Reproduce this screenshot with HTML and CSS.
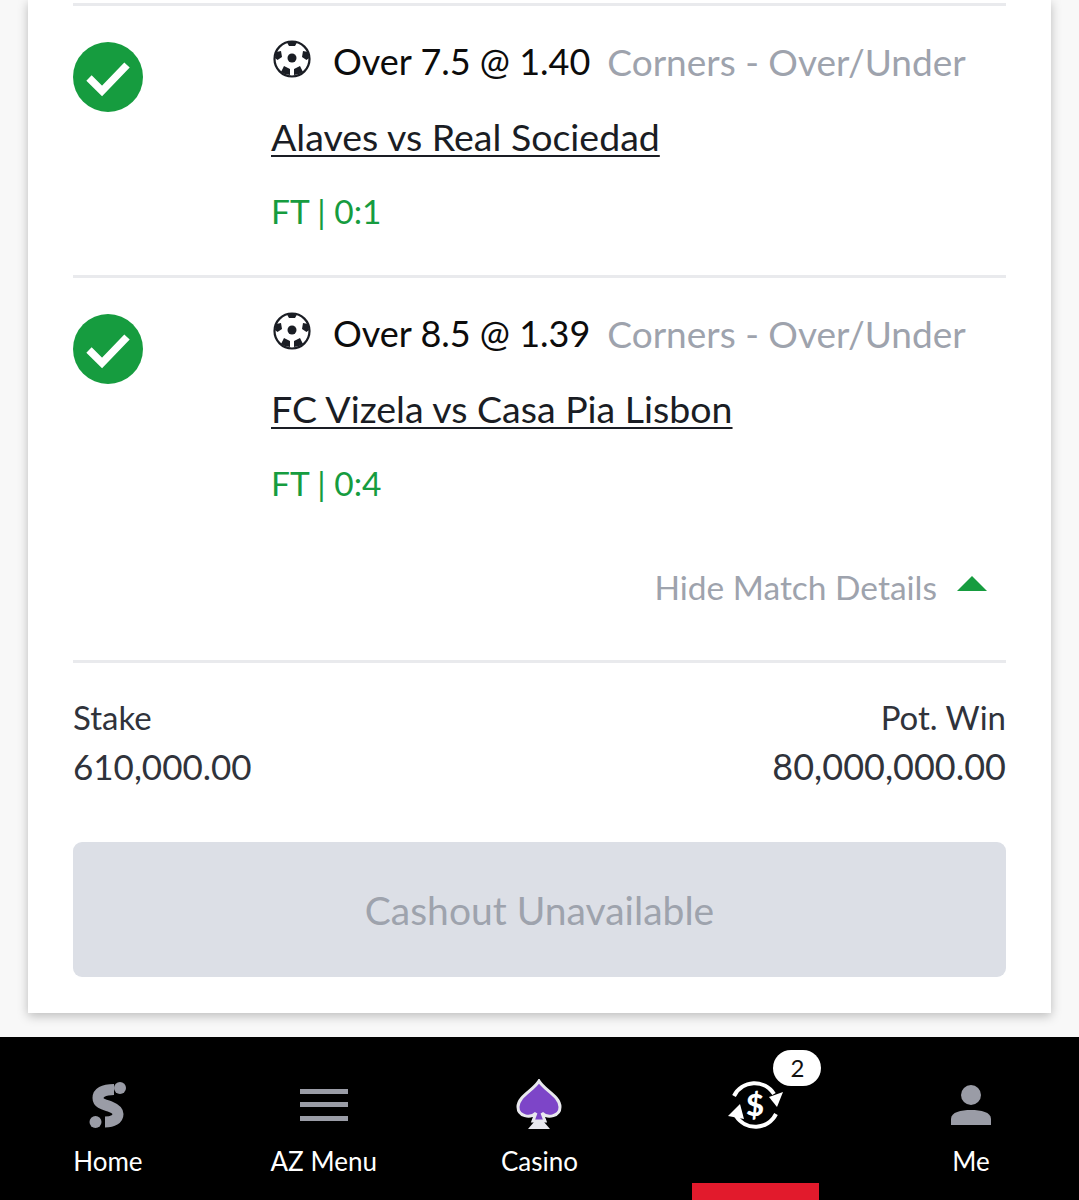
FILE: index.html
```html
<!DOCTYPE html>
<html lang="en">
  <head>
    <meta charset="UTF-8" />
    <title>Bet details</title>
    <link rel="stylesheet" href="styles.css">
  </head>
  <body>
    <main class="card">
      <section class="leg">
        <svg class="tick" viewBox="0 0 70 70"><circle cx="35" cy="35" r="35" fill="#169c3f"/><path d="M16 36 L29 49 L54 23" fill="none" stroke="#fff" stroke-width="7.5"/></svg>
        <div class="leg-info">
          <div class="leg-line">
            <svg class="ball" viewBox="0 0 38 38"><circle cx="19" cy="19" r="17.5" fill="#fff" stroke="#1a1d24" stroke-width="2.2"/><circle cx="19" cy="18" r="4.5" fill="#1a1d24"/><path d="M14 2.5 Q19 1 24 2.5 L22 6 L16 6 Z M3 12 L8 11 L9 17 L4.5 20 L2 18 Z M35 12 L30 11 L29 17 L33.5 20 L36 18 Z M8 32 L11 26 L17 29 L17 35 Q12 35 8 32 Z M30 32 L27 26 L21 29 L21 35 Q26 35 30 32 Z" fill="#1a1d24"/></svg>
            <span class="pick">Over 7.5 @ 1.40</span>
            <span class="market">Corners - Over/Under</span>
          </div>
          <div class="leg-line"><a class="match" href="#">Alaves vs Real Sociedad</a></div>
          <div class="leg-line score">FT | 0:1</div>
        </div>
      </section>

      <section class="leg">
        <svg class="tick" viewBox="0 0 70 70"><circle cx="35" cy="35" r="35" fill="#169c3f"/><path d="M16 36 L29 49 L54 23" fill="none" stroke="#fff" stroke-width="7.5"/></svg>
        <div class="leg-info">
          <div class="leg-line">
            <svg class="ball" viewBox="0 0 38 38"><circle cx="19" cy="19" r="17.5" fill="#fff" stroke="#1a1d24" stroke-width="2.2"/><circle cx="19" cy="18" r="4.5" fill="#1a1d24"/><path d="M14 2.5 Q19 1 24 2.5 L22 6 L16 6 Z M3 12 L8 11 L9 17 L4.5 20 L2 18 Z M35 12 L30 11 L29 17 L33.5 20 L36 18 Z M8 32 L11 26 L17 29 L17 35 Q12 35 8 32 Z M30 32 L27 26 L21 29 L21 35 Q26 35 30 32 Z" fill="#1a1d24"/></svg>
            <span class="pick">Over 8.5 @ 1.39</span>
            <span class="market">Corners - Over/Under</span>
          </div>
          <div class="leg-line"><a class="match" href="#">FC Vizela vs Casa Pia Lisbon</a></div>
          <div class="leg-line score">FT | 0:4</div>
        </div>
      </section>

      <div class="toggle">
        <span>Hide Match Details</span>
        <span class="caret"></span>
      </div>

      <section class="totals">
        <div>
          <div class="totals-label">Stake</div>
          <div class="totals-value">610,000.00</div>
        </div>
        <div class="totals-right">
          <div class="totals-label">Pot. Win</div>
          <div class="totals-value totals-win">80,000,000.00</div>
        </div>
      </section>

      <button class="cashout" type="button">Cashout Unavailable</button>
    </main>

    <nav class="tabbar">
      <a class="tab" href="#">
        <span class="tab-icon">
          <svg width="38" height="48" viewBox="0 0 38 48"><path d="M25 8.5 C14 8.5 9 12 9 17 C9 23 17 24 22 26 C27 28 29 30 29 33 C29 38 24 41 16 41" fill="none" stroke="#9a9ca6" stroke-width="11"/><circle cx="31" cy="7" r="6" fill="#9a9ca6"/><circle cx="6.5" cy="41" r="6" fill="#9a9ca6"/></svg>
        </span>
        <span class="tab-label">Home</span>
      </a>
      <a class="tab" href="#">
        <span class="tab-icon">
          <svg width="48" height="32" viewBox="0 0 48 32"><path d="M0 0H48V5H0Z M0 13H48V18H0Z M0 27H48V32H0Z" fill="#9a9ca6"/></svg>
        </span>
        <span class="tab-label">AZ Menu</span>
      </a>
      <a class="tab" href="#">
        <span class="tab-icon">
          <svg width="46" height="52" viewBox="0 0 46 52"><path d="M23 2 C28 11 44 17 44 28 C44 37 32 40 26 34 L29 42 H17 L20 34 C14 40 2 37 2 28 C2 17 18 11 23 2 Z" fill="#7d45c8" stroke="#e8e8ee" stroke-width="3"/><path d="M12 50 L18 43 H28 L34 50 Z" fill="#e8e8ee"/></svg>
        </span>
        <span class="tab-label">Casino</span>
      </a>
      <a class="tab" href="#">
        <span class="tab-icon">
          <svg width="56" height="52" viewBox="0 0 56 52" fill="none" stroke="#fff" stroke-width="4"><path d="M7 17 A23 23 0 0 1 47 15"/><path d="M49 35 A23 23 0 0 1 9 37"/><path d="M42 18 L56 13 L50 28 Z" fill="#fff" stroke="none"/><path d="M1 37 L13 25 L17 40 Z" fill="#fff" stroke="none"/><text x="28" y="37" text-anchor="middle" class="cash-sign">$</text></svg>
        </span>
        <span class="badge">2</span>
        <span class="active-bar"></span>
      </a>
      <a class="tab" href="#">
        <span class="tab-icon">
          <svg width="40" height="40" viewBox="0 0 40 40"><circle cx="20" cy="10" r="10" fill="#9a9ca6"/><path d="M0 40 V34 C0 27 10 25 20 25 C30 25 40 27 40 34 V40 Z" fill="#9a9ca6"/></svg>
        </span>
        <span class="tab-label">Me</span>
      </a>
    </nav>
  </body>
</html>
```

FILE: styles.css
```css
html,
body {
  height: 1200px;
  overflow: hidden;
}

body {
  margin: 0;
  background-color: #f8f8f8;
  color: #1a1d24;
  font-family: "Lato", "Open Sans", sans-serif;
  display: flex;
  flex-direction: column;
}

.card {
  margin: 0 28px;
  padding: 3px 45px 36px;
  height: 1013px;
  box-sizing: border-box;
  background-color: #fff;
  box-shadow: 0 3px 10px rgba(0, 0, 0, 0.25);
}

.leg {
  display: grid;
  grid-template-columns: 198px 1fr;
  padding: 19px 0 25px;
  border-top: 3px solid #e9eaed;
  height: 272px;
  box-sizing: border-box;
}

.tick {
  width: 70px;
  height: 70px;
  margin-top: 17px;
}

.leg-line {
  display: flex;
  align-items: center;
  height: 75px;
  padding-bottom: 3px;
  box-sizing: border-box;
  font-size: 36px;
  white-space: nowrap;
}

.ball {
  width: 38px;
  height: 38px;
  margin: -4px 22px 0 2px;
  flex-shrink: 0;
}

.pick {
  color: #0c0c0c;
  margin-right: 17px;
}

.market {
  color: #9ea3ad;
  font-size: 37px;
}

.match {
  color: #1a1d24;
  font-size: 37.5px;
  text-decoration: underline;
  text-decoration-thickness: 2px;
  text-underline-offset: 4px;
}

.score {
  color: #169c3f;
  font-size: 33.5px;
}

.toggle {
  display: flex;
  justify-content: flex-end;
  align-items: center;
  gap: 20px;
  height: 40px;
  margin-top: 20px;
  padding: 0 19px 53px 0;
  border-bottom: 3px solid #e9eaed;
  color: #9ea3ad;
  font-size: 33.5px;
}

.caret {
  width: 0;
  height: 0;
  margin-top: -8px;
  border-left: 15px solid transparent;
  border-right: 15px solid transparent;
  border-bottom: 15px solid #169c3f;
}

.totals {
  display: flex;
  justify-content: space-between;
  padding-top: 30px;
  line-height: 49px;
  color: #30333b;
}

.totals-right {
  text-align: right;
}

.totals-label {
  font-size: 33px;
}

.totals-value {
  font-size: 35px;
}

.totals-win {
  font-size: 36px;
}

.cashout {
  display: block;
  width: 100%;
  height: 135px;
  margin-top: 51px;
  border: none;
  border-radius: 9px;
  background: #dcdfe6;
  color: #9ea3ad;
  font-family: inherit;
  font-size: 39px;
}

.tabbar {
  display: grid;
  grid-template-columns: repeat(5, 1fr);
  height: 163px;
  margin-top: 24px;
  background: #000;
}

.tab {
  position: relative;
  display: flex;
  flex-direction: column;
  align-items: center;
  padding-top: 40px;
  color: #fff;
  text-decoration: none;
}

.tab-icon {
  display: flex;
  align-items: center;
  justify-content: center;
  height: 56px;
}

.tab-label {
  margin-top: 10px;
  line-height: 36px;
  font-size: 26px;
}

.cash-sign {
  fill: #fff;
  stroke: none;
  font-family: "Lato", sans-serif;
  font-weight: 900;
  font-size: 31px;
}

.badge {
  position: absolute;
  top: 13px;
  left: 126px;
  width: 48px;
  height: 36px;
  border-radius: 18px;
  background: #fff;
  color: #111;
  font-size: 24px;
  line-height: 36px;
  text-align: center;
}

.active-bar {
  position: absolute;
  bottom: 0;
  left: 45px;
  width: 127px;
  height: 17px;
  background: #e21a2c;
}
```
